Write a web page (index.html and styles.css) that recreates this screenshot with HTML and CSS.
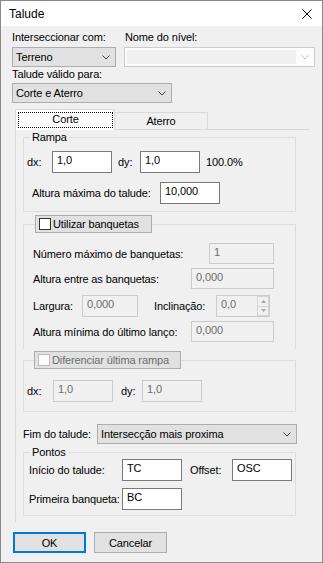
FILE: index.html
```html
<!DOCTYPE html>
<html lang="pt">
<head>
<meta charset="utf-8">
<title>Talude</title>
<link rel="stylesheet" href="styles.css">
</head>
<body>
<div class="window">
  <div class="titlebar">
    <span class="title">Talude</span>
    <svg class="close" width="10" height="10" viewBox="0 0 10 10"><path d="M0.5 0.5 L9.5 9.5 M9.5 0.5 L0.5 9.5" stroke="#000" stroke-width="1" fill="none"/></svg>
  </div>
  <div class="content">
    <div class="top-row">
      <div class="col-inter">
        <div class="lbl">Interseccionar com:</div>
        <div class="combo w-terreno mt2"><span>Terreno</span><svg class="chev" width="8" height="5" viewBox="0 0 8 5"><path d="M0.5 0.5 L4 4 L7.5 0.5" stroke="#404040" fill="none"/></svg></div>
      </div>
      <div class="col-nome">
        <div class="lbl lbl-nome">Nome do nível:</div>
        <div class="combo combo-disabled w-nome mt2"><span class="combo-inner"></span><svg class="chev" width="8" height="5" viewBox="0 0 8 5"><path d="M0.5 0.5 L4 4 L7.5 0.5" stroke="#c4c4c4" fill="none"/></svg></div>
      </div>
    </div>
    <div class="lbl">Talude válido para:</div>
    <div class="combo w-valido mt1"><span>Corte e Aterro</span><svg class="chev" width="8" height="5" viewBox="0 0 8 5"><path d="M0.5 0.5 L4 4 L7.5 0.5" stroke="#404040" fill="none"/></svg></div>

    <div class="tabs">
      <div class="tab tab-active"><div class="focus">Corte</div></div>
      <div class="tab tab-inactive">Aterro</div>
    </div>
    <div class="panel">
      <fieldset class="group g-rampa">
        <legend class="legend-text">Rampa</legend>
        <div class="gbody rampa-body">
          <div class="row">
            <span class="l-dx">dx:</span>
            <div class="field w60">1,0</div>
            <span class="l-dy">dy:</span>
            <div class="field w60">1,0</div>
            <span class="pct">100.0%</span>
          </div>
          <div class="row row-alt">
            <span class="l-altmax">Altura máxima do talude:</span>
            <div class="field w60">10,000</div>
          </div>
        </div>
      </fieldset>

      <fieldset class="group g-banq">
        <legend class="legend-btn lb-banq">
          <div class="cbbtn w-utilizar"><span class="cbox"></span><span class="cbtext">Utilizar banquetas</span></div>
        </legend>
        <div class="gbody banq-body">
          <div class="row r21 between">
            <span>Número máximo de banquetas:</span>
            <div class="field disabled w65 h21">1</div>
          </div>
          <div class="row r21 between mt4">
            <span>Altura entre as banquetas:</span>
            <div class="field disabled w83 h21">0,000</div>
          </div>
          <div class="row mt6">
            <span class="l-larg">Largura:</span>
            <div class="field disabled w56">0,000</div>
            <span class="l-incl">Inclinação:</span>
            <div class="spin">
              <div class="spin-val">0,0</div>
              <div class="spin-btns">
                <div class="spin-b"><svg width="5" height="3" viewBox="0 0 5 3"><path d="M0 3 L2.5 0 L5 3 Z" fill="#a6a6a6"/></svg></div>
                <div class="spin-b"><svg width="5" height="3" viewBox="0 0 5 3"><path d="M0 0 L2.5 3 L5 0 Z" fill="#a6a6a6"/></svg></div>
              </div>
            </div>
          </div>
          <div class="row r21 between mt4">
            <span>Altura mínima do último lanço:</span>
            <div class="field disabled w83 h21">0,000</div>
          </div>
        </div>
      </fieldset>

      <fieldset class="group g-dif">
        <legend class="legend-btn lb-dif">
          <div class="cbbtn w-dif"><span class="cbox cbox-dis"></span><span class="cbtext dis-text">Diferenciar última rampa</span></div>
        </legend>
        <div class="gbody dif-body">
          <div class="row">
            <span class="l-dx2">dx:</span>
            <div class="field disabled w60">1,0</div>
            <span class="l-dy2">dy:</span>
            <div class="field disabled w60">1,0</div>
          </div>
        </div>
      </fieldset>

      <div class="row fim-row">
        <span class="l-fim">Fim do talude:</span>
        <div class="combo w-fim"><span>Intersecção mais proxima</span><svg class="chev" width="8" height="5" viewBox="0 0 8 5"><path d="M0.5 0.5 L4 4 L7.5 0.5" stroke="#404040" fill="none"/></svg></div>
      </div>

      <fieldset class="group g-pontos">
        <legend class="legend-text lt14">Pontos</legend>
        <div class="gbody pontos-body">
          <div class="row">
            <span class="l-ini">Início do talude:</span>
            <div class="field w60">TC</div>
            <span class="l-off">Offset:</span>
            <div class="field w60">OSC</div>
          </div>
          <div class="row mt7">
            <span class="l-ini">Primeira banqueta:</span>
            <div class="field w60">BC</div>
          </div>
        </div>
      </fieldset>
    </div>

    <div class="buttons">
      <div class="btn btn-default">OK</div>
      <div class="btn">Cancelar</div>
    </div>
  </div>
</div>
</body>
</html>
```
FILE: styles.css
```css
* { box-sizing: border-box; }
html, body { margin: 0; padding: 0; }
body {
  font-family: "Liberation Sans", Arial, sans-serif;
  font-size: 11px;
  letter-spacing: -0.12px;
  color: #000;
  background: #f0f0f0;
}
.window {
  width: 323px;
  height: 563px;
  border: 1px solid #8a8a8a;
  background: #f0f0f0;
  display: flex;
  flex-direction: column;
}
.titlebar {
  flex: none;
  height: 25px;
  background: #fff;
  display: flex;
  align-items: center;
  justify-content: space-between;
  padding-left: 8px;
}
.title { font-size: 12px; letter-spacing: 0; }
.close { margin-right: 10px; display: block; }

.content {
  flex: 1;
  padding: 4px 0 0 11px;
  display: flex;
  flex-direction: column;
  align-items: flex-start;
}
.lbl { line-height: 15px; }
.top-row { display: flex; }
.col-inter { width: 112px; }
.lbl-nome { padding-left: 1px; }
.mt1 { margin-top: 1px; }
.mt2 { margin-top: 2px; }
.mt4 { margin-top: 4px; }
.mt6 { margin-top: 6px; }
.mt7 { margin-top: 7px; }

.combo {
  height: 20px;
  display: flex;
  align-items: center;
  justify-content: space-between;
  border: 1px solid #adadad;
  background: #e1e1e1;
  padding: 0 5px 0 3px;
  white-space: nowrap;
}
.chev { display: block; flex: none; }
.w-terreno { width: 104px; }
.w-nome { width: 191px; }
.w-valido { width: 160px; }
.w-fim { width: 200px; }
.combo-disabled {
  border-color: #cccccc;
  background: #fcfcfc;
  padding: 2px 5px 2px 2px;
  align-items: stretch;
}
.combo-disabled .chev { align-self: center; }
.combo-inner { width: 169px; background: #f0f0f0; }

.tabs {
  display: flex;
  align-items: flex-end;
  margin: 6px 0 -1px 3px;
  position: relative;
  z-index: 1;
}
.tab {
  border: 1px solid #d9d9d9;
  border-bottom: none;
  text-align: center;
}
.tab-active {
  width: 100px;
  height: 21px;
  background: #fff;
  padding: 2px 1px 0 2px;
}
.focus {
  height: 16px;
  border: 1px dotted #000;
  line-height: 13px;
}
.tab-inactive {
  width: 94px;
  height: 17px;
  margin-left: -1px;
  margin-bottom: 1px;
  background: #f0f0f0;
  line-height: 16px;
}
.panel {
  width: 295px;
  height: 393px;
  border-top: 1px solid #d9d9d9;
  border-left: 1px solid #d9d9d9;
  margin-left: 3px;
  padding-left: 7px;
  display: flex;
  flex-direction: column;
  align-items: flex-start;
}

.group {
  margin: 0;
  padding: 0;
  border: 1px solid #dcdcdc;
  width: 273px;
  min-width: 0;
}
.legend-text {
  padding: 0 2px;
  margin-left: 6px;
  line-height: 15px;
}
.lt14 { line-height: 14px; }
.legend-btn { padding: 0; }
.lb-banq { margin-left: 11px; }
.lb-dif { margin-left: 10px; }

.row { display: flex; align-items: center; white-space: nowrap; }
.between { justify-content: space-between; }
.r21 { height: 21px; }

.field {
  height: 22px;
  border: 1px solid #7a7a7a;
  background: #fff;
  padding: 1px 0 0 4px;
  line-height: 15px;
  flex: none;
}
.field.disabled {
  border-color: #cccccc;
  background: #f0f0f0;
  color: #6d6d6d;
}
.h21 { height: 21px; }
.w56 { width: 56px; }
.w60 { width: 60px; }
.w65 { width: 65px; }
.w83 { width: 83px; }

.rampa-body { padding: 6px 0 7px 3px; }
.l-dx { width: 25px; }
.l-dy { width: 22px; margin-left: 6px; }
.pct { margin-left: 6px; }
.row-alt { margin-top: 9px; padding-left: 5px; }
.l-altmax { width: 128px; }

.g-banq { margin-top: 3px; border-bottom: none; }
.cbbtn {
  height: 18px;
  display: flex;
  align-items: center;
  border: 1px solid #adadad;
  background: #e1e1e1;
  padding-left: 3px;
}
.w-utilizar { width: 117px; }
.w-dif { width: 147px; }
.cbox {
  width: 12px;
  height: 12px;
  border: 1px solid #333;
  background: #fff;
  flex: none;
}
.cbox-dis { border-color: #bcbcbc; background: #fcfcfc; }
.cbtext { margin-left: 2px; }
.dis-text { color: #6d6d6d; }
.banq-body { padding: 10px 21px 7px 9px; }
.l-larg { width: 49px; }
.l-incl { width: 62px; margin-left: 16px; }
.spin {
  width: 54px;
  height: 22px;
  display: flex;
  border: 1px solid #cccccc;
  background: #f0f0f0;
  color: #6d6d6d;
}
.spin-val { flex: 1; padding: 1px 0 0 4px; line-height: 15px; }
.spin-btns {
  width: 12px;
  display: flex;
  flex-direction: column;
}
.spin-b {
  flex: 1;
  border: 1px solid #d4d4d4;
  background: #f0f0f0;
  display: flex;
  align-items: center;
  justify-content: center;
}
.spin-b + .spin-b { border-top: none; }
.spin-b svg { display: block; }

.g-dif { margin-top: 2px; }
.dif-body { padding: 11px 0 9px 3px; }
.l-dx2 { width: 26px; }
.l-dy2 { width: 21px; margin-left: 8px; }

.fim-row { margin-top: 12px; }
.l-fim { width: 74px; }

.g-pontos { margin-top: 1px; }
.pontos-body { padding: 0 0 5px 5px; }
.l-ini { width: 93px; }
.l-off { width: 42px; margin-left: 8px; }

.buttons {
  display: flex;
  margin: 10px 0 0 1px;
  gap: 8px;
}
.btn {
  width: 73px;
  height: 21px;
  border: 1px solid #adadad;
  background: #e1e1e1;
  display: flex;
  align-items: center;
  justify-content: center;
}
.btn-default { border: 2px solid #0078d7; }
```
